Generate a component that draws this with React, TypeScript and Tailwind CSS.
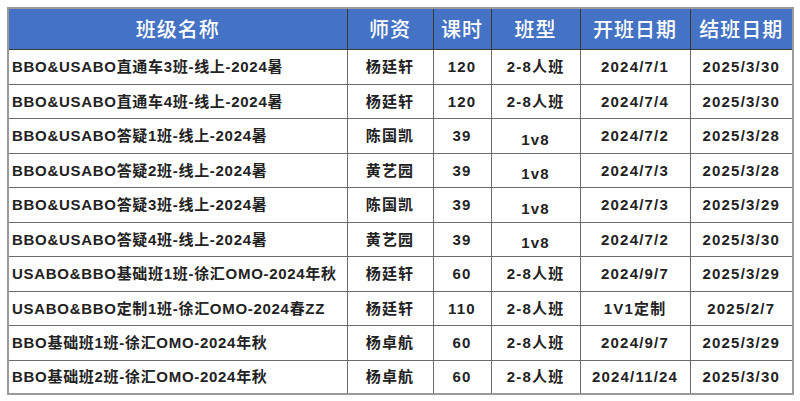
import React from "react";

const rows: [string, string, string, string, string, string][] = [
  ["BBO&USABO直通车3班-线上-2024暑", "杨廷轩", "120", "2-8人班", "2024/7/1", "2025/3/30"],
  ["BBO&USABO直通车4班-线上-2024暑", "杨廷轩", "120", "2-8人班", "2024/7/4", "2025/3/30"],
  ["BBO&USABO答疑1班-线上-2024暑", "陈国凯", "39", "1v8", "2024/7/2", "2025/3/28"],
  ["BBO&USABO答疑2班-线上-2024暑", "黄艺园", "39", "1v8", "2024/7/3", "2025/3/28"],
  ["BBO&USABO答疑3班-线上-2024暑", "陈国凯", "39", "1v8", "2024/7/3", "2025/3/29"],
  ["BBO&USABO答疑4班-线上-2024暑", "黄艺园", "39", "1v8", "2024/7/2", "2025/3/30"],
  ["USABO&BBO基础班1班-徐汇OMO-2024年秋", "杨廷轩", "60", "2-8人班", "2024/9/7", "2025/3/29"],
  ["USABO&BBO定制1班-徐汇OMO-2024春ZZ", "杨廷轩", "110", "2-8人班", "1V1定制", "2025/2/7"],
  ["BBO基础班1班-徐汇OMO-2024年秋", "杨卓航", "60", "2-8人班", "2024/9/7", "2025/3/29"],
  ["BBO基础班2班-徐汇OMO-2024年秋", "杨卓航", "60", "2-8人班", "2024/11/24", "2025/3/30"],
];

const headers = ["班级名称", "师资", "课时", "班型", "开班日期", "结班日期"];
const widths = ["w-[339px]", "w-[86px]", "w-[58px]", "w-[89px]", "w-[110px]", "w-[103px]"];

export default function App() {
  return (
    <div className="w-[800px] h-[401px] bg-white pt-[7px] pl-[7px]">
      <table className="table-fixed border-collapse w-[785px] border-2 border-[#9a9a9a]">
        <colgroup>
          {widths.map((w, i) => (
            <col key={i} className={w} />
          ))}
        </colgroup>
        <thead>
          <tr className="h-[41px] bg-[#4472c4]">
            {headers.map((h, i) => (
              <th
                key={i}
                className="border border-[#3a3a3a] border-t-[#9a9a9a] text-white text-[20px] font-medium tracking-[1px] text-center p-0 leading-none font-['Noto_Sans_CJK_SC',sans-serif]"
              >
                {h}
              </th>
            ))}
          </tr>
        </thead>
        <tbody>
          {rows.map((r, ri) => (
            <tr key={ri} className={ri % 2 === 0 ? "h-[35px]" : "h-[34px]"}>
              {r.map((c, ci) => (
                <td
                  key={ci}
                  className={
                    "border border-[#6b6b6b] p-0 text-[15px] font-semibold text-[#222222] leading-none whitespace-nowrap font-['Liberation_Sans','Noto_Sans_CJK_SC',sans-serif] " +
                    (ci === 0 ? "text-left pl-[3px] tracking-[0.7px]" : "text-center tracking-[1.2px]") +
                    (c === "1v8" ? " align-bottom pb-[6px]" : " align-middle")
                  }
                >
                  {c}
                </td>
              ))}
            </tr>
          ))}
        </tbody>
      </table>
    </div>
  );
}
